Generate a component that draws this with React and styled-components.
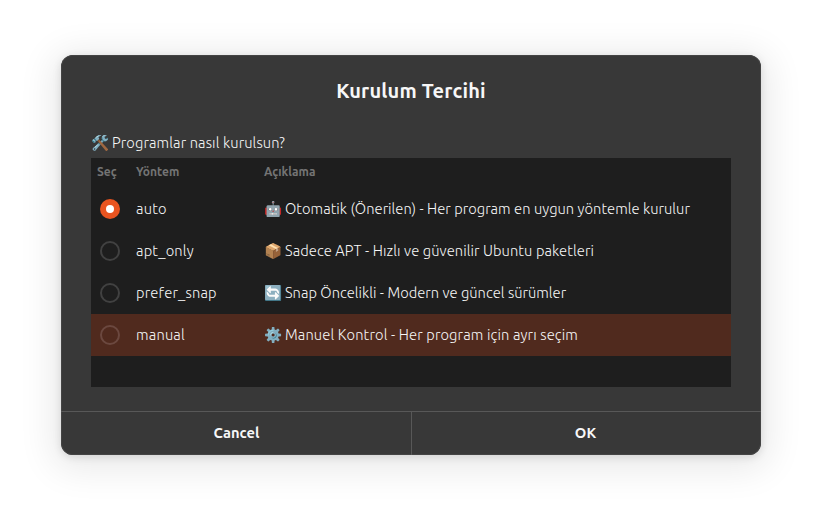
import React, { useState } from "react";
import styled, { createGlobalStyle } from "styled-components";

const GlobalStyle = createGlobalStyle`
  * { box-sizing: border-box; }
  body {
    margin: 0;
    background: #fff;
    font-family: Ubuntu, "Open Sans", "Noto Color Emoji", sans-serif;
    font-size: 14.667px;
    font-weight: 360;
    color: #f7f7f7;
  }
`;

const Desktop = styled.main`
  width: 822px;
  height: 522px;
  padding: 55px 61px;
  overflow: hidden;
`;

const Dialog = styled.section`
  display: flex;
  flex-direction: column;
  width: 700px;
  height: 400px;
  overflow: hidden;
  border-radius: 12px;
  background: #383838;
  box-shadow: inset 0 0 0 1px #444, 0 2px 8px rgba(0, 0, 0, 0.12),
    0 6px 36px 8px rgba(0, 0, 0, 0.09);
`;

const Title = styled.h1`
  margin: 0;
  height: 72px;
  line-height: 72px;
  text-align: center;
  font-size: 20px;
  font-weight: 700;
  letter-spacing: 0.17px;
  color: #f7f7f7;
`;

const Content = styled.div`
  flex: 1;
  padding: 0 30px;
`;

const Question = styled.p`
  display: flex;
  align-items: center;
  margin: 0;
  height: 31px;
  letter-spacing: 0.13px;
`;

const Emoji = styled.span`
  flex: none;
  width: 21px;
  font-family: "Noto Color Emoji";
  font-size: 14.667px;
  letter-spacing: 0;
  white-space: nowrap;
`;

const List = styled.div`
  height: 229px;
  background: #1e1e1e;
`;

const columns = "45px 128px 1fr";

const HeaderRow = styled.div`
  display: grid;
  grid-template-columns: ${columns};
  align-items: center;
  height: 30px;
  padding-bottom: 3px;
  font-size: 12px;
  font-weight: 700;
  color: #747474;
`;

const HeaderCell = styled.span`
  padding-left: ${({ $inset }) => ($inset ? "6px" : "0")};
`;

const Row = styled.div`
  display: grid;
  grid-template-columns: ${columns};
  align-items: center;
  height: 42px;
  background: ${({ $highlighted }) => ($highlighted ? "#502a1e" : "transparent")};
`;

const Radio = styled.button`
  display: grid;
  place-items: center;
  width: 20px;
  height: 20px;
  margin-left: 9px;
  padding: 0;
  border-radius: 50%;
  border: ${({ $checked, $highlighted }) =>
    $checked ? "0" : `2px solid ${$highlighted ? "#6b483f" : "#414141"}`};
  background: ${({ $checked }) => ($checked ? "#e95420" : "transparent")};

  &::after {
    content: "";
    display: ${({ $checked }) => ($checked ? "block" : "none")};
    width: 8px;
    height: 8px;
    border-radius: 50%;
    background: #fff;
  }
`;

const Method = styled.span`
  padding-bottom: 2px;
  letter-spacing: 0.2px;
`;

const Description = styled.span`
  display: flex;
  align-items: center;
  padding-bottom: 1px;
  white-space: nowrap;
  letter-spacing: ${({ $tracking }) => $tracking}px;
`;

const Actions = styled.footer`
  display: grid;
  grid-template-columns: 351px 1fr;
  height: 44px;
  border-top: 1px solid #585858;
`;

const Action = styled.button`
  border: 0;
  border-right: ${({ $divided }) => ($divided ? "1px solid #585858" : "0")};
  padding: ${({ $divided }) => ($divided ? "0 0 2px 1px" : "0 2px 2px 0")};
  background: transparent;
  color: #f7f7f7;
  font: inherit;
  font-weight: 700;
`;

const methods = [
  { id: "auto", icon: "🤖", tracking: 0.05, text: "Otomatik (Önerilen) - Her program en uygun yöntemle kurulur" },
  { id: "apt_only", icon: "📦", tracking: 0.1, text: "Sadece APT - Hızlı ve güvenilir Ubuntu paketleri" },
  { id: "prefer_snap", icon: "🔄", tracking: 0.04, text: "Snap Öncelikli - Modern ve güncel sürümler" },
  { id: "manual", icon: "⚙️", tracking: 0.15, text: "Manuel Kontrol - Her program için ayrı seçim" },
];

export default function App() {
  const [selected, setSelected] = useState("auto");
  return (
    <Desktop>
      <GlobalStyle />
      <Dialog role="dialog">
        <Title>Kurulum Tercihi</Title>
        <Content>
          <Question>
            <Emoji>🛠️</Emoji>Programlar nasıl kurulsun?
          </Question>
          <List>
            <HeaderRow>
              <HeaderCell $inset>Seç</HeaderCell>
              <HeaderCell>Yöntem</HeaderCell>
              <HeaderCell>Açıklama</HeaderCell>
            </HeaderRow>
            {methods.map(({ id, icon, tracking, text }) => (
              <Row key={id} $highlighted={id === "manual"}>
                <Radio
                  aria-label={id}
                  $checked={selected === id}
                  $highlighted={id === "manual"}
                  onClick={() => setSelected(id)}
                />
                <Method>{id}</Method>
                <Description $tracking={tracking}>
                  <Emoji>{icon}</Emoji>
                  {text}
                </Description>
              </Row>
            ))}
          </List>
        </Content>
        <Actions>
          <Action $divided>Cancel</Action>
          <Action>OK</Action>
        </Actions>
      </Dialog>
    </Desktop>
  );
}
